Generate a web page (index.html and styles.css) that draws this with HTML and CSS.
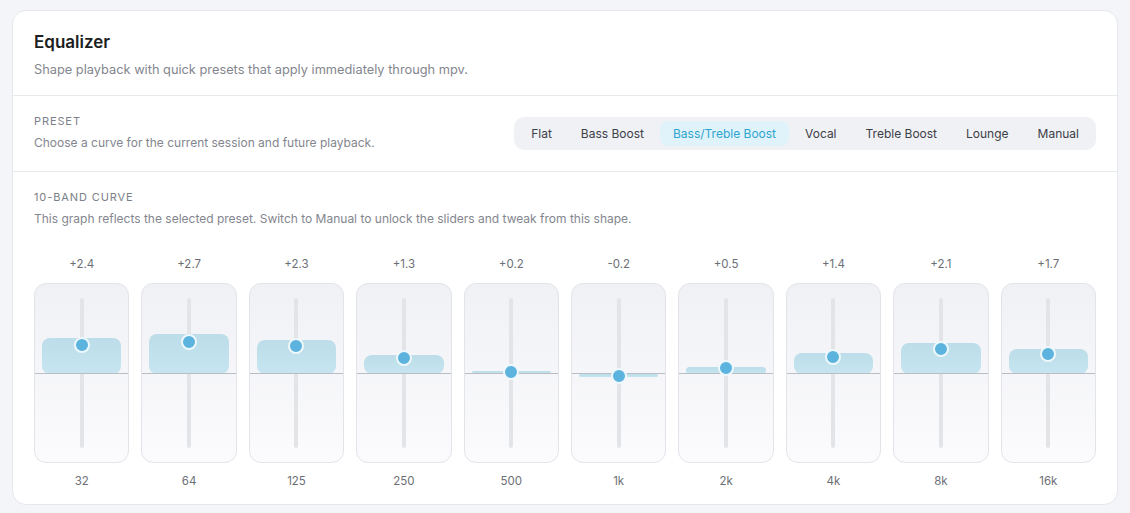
FILE: index.html
```html
<!DOCTYPE html>
<html lang="en">
<head>
    <meta charset="UTF-8">
    <meta name="viewport" content="width=device-width, initial-scale=1.0">
    <title>Equalizer</title>
    <link rel="stylesheet" href="styles.css">
</head>
<body>

<div class="panel">
    <div class="panel-head">
        <h2>Equalizer</h2>
        <p>Shape playback with quick presets that apply immediately through mpv.</p>
    </div>

    <div class="preset-row">
        <div>
            <div class="label">Preset</div>
            <p class="desc">Choose a curve for the current session and future playback.</p>
        </div>
        <div class="segmented">
            <button>Flat</button>
            <button>Bass Boost</button>
            <button class="active">Bass/Treble Boost</button>
            <button>Vocal</button>
            <button>Treble Boost</button>
            <button>Lounge</button>
            <button>Manual</button>
        </div>
    </div>

    <div class="curve">
        <div class="label">10-Band Curve</div>
        <p class="desc">This graph reflects the selected preset. Switch to Manual to unlock the sliders and tweak from this shape.</p>

        <div class="bands">
            <div class="band">
                <span class="val">+2.4</span>
                <div class="slider"><i class="track"></i><i class="bar" style="top:54px;height:36px"></i><i class="zero"></i><i class="thumb" style="top:53.2px"></i></div>
                <span class="freq">32</span>
            </div>
            <div class="band">
                <span class="val">+2.7</span>
                <div class="slider"><i class="track"></i><i class="bar" style="top:49.5px;height:40.5px"></i><i class="zero"></i><i class="thumb" style="top:49.6px"></i></div>
                <span class="freq">64</span>
            </div>
            <div class="band">
                <span class="val">+2.3</span>
                <div class="slider"><i class="track"></i><i class="bar" style="top:55.5px;height:34.5px"></i><i class="zero"></i><i class="thumb" style="top:54.4px"></i></div>
                <span class="freq">125</span>
            </div>
            <div class="band">
                <span class="val">+1.3</span>
                <div class="slider"><i class="track"></i><i class="bar" style="top:70.5px;height:19.5px"></i><i class="zero"></i><i class="thumb" style="top:66.4px"></i></div>
                <span class="freq">250</span>
            </div>
            <div class="band">
                <span class="val">+0.2</span>
                <div class="slider"><i class="track"></i><i class="bar" style="top:87px;height:3px"></i><i class="zero"></i><i class="thumb" style="top:79.6px"></i></div>
                <span class="freq">500</span>
            </div>
            <div class="band">
                <span class="val">-0.2</span>
                <div class="slider"><i class="track"></i><i class="bar" style="top:90px;height:3px"></i><i class="zero"></i><i class="thumb" style="top:84.4px"></i></div>
                <span class="freq">1k</span>
            </div>
            <div class="band">
                <span class="val">+0.5</span>
                <div class="slider"><i class="track"></i><i class="bar" style="top:82.5px;height:7.5px"></i><i class="zero"></i><i class="thumb" style="top:76px"></i></div>
                <span class="freq">2k</span>
            </div>
            <div class="band">
                <span class="val">+1.4</span>
                <div class="slider"><i class="track"></i><i class="bar" style="top:69px;height:21px"></i><i class="zero"></i><i class="thumb" style="top:65.2px"></i></div>
                <span class="freq">4k</span>
            </div>
            <div class="band">
                <span class="val">+2.1</span>
                <div class="slider"><i class="track"></i><i class="bar" style="top:58.5px;height:31.5px"></i><i class="zero"></i><i class="thumb" style="top:56.8px"></i></div>
                <span class="freq">8k</span>
            </div>
            <div class="band">
                <span class="val">+1.7</span>
                <div class="slider"><i class="track"></i><i class="bar" style="top:64.5px;height:25.5px"></i><i class="zero"></i><i class="thumb" style="top:61.6px"></i></div>
                <span class="freq">16k</span>
            </div>
        </div>
    </div>
</div>

</body>
</html>
```

FILE: styles.css
```css
body {
    margin: 0;
    padding: 10px 12px;
    background: #f4f5f8;
    font-family: Inter, "Noto Sans", sans-serif;
    color: #1c1d21;
}
.panel {
    background: #fff;
    border: 1px solid #e6e8ec;
    border-radius: 14px;
}
.panel-head {
    padding: 20px 21px 16px;
    border-bottom: 1px solid #e9eaee;
}
.panel-head h2 {
    margin: 0;
    font-size: 17px;
    line-height: 22px;
    font-weight: 600;
}
.panel-head p {
    margin: 8px 0 0;
    font-size: 12.8px;
    line-height: 18px;
    color: #83868e;
}
.label {
    font-size: 11px;
    line-height: 14px;
    letter-spacing: 0.9px;
    text-transform: uppercase;
    color: #7c7f87;
}
.desc {
    margin: 6px 0 0;
    font-size: 12px;
    line-height: 18px;
    color: #83868e;
}
.preset-row {
    display: flex;
    align-items: center;
    justify-content: space-between;
    padding: 18px 21px 19px;
    border-bottom: 1px solid #e9eaee;
}
.segmented {
    display: flex;
    gap: 3px;
    padding: 4px;
    background: #eff1f5;
    border-radius: 10px;
}
.segmented button {
    border: none;
    background: none;
    font-family: inherit;
    font-size: 12px;
    line-height: 25px;
    padding: 0 13px;
    border-radius: 8px;
    color: #3d4047;
    cursor: pointer;
}
.segmented button.active {
    background: #e0f2fa;
    color: #2ea5cf;
}
.curve {
    padding: 18px 21px 15px;
}
.bands {
    display: grid;
    grid-template-columns: repeat(10, 1fr);
    gap: 12px;
    margin-top: 28px;
}
.band {
    display: flex;
    flex-direction: column;
    align-items: center;
}
.val, .freq {
    font-size: 11.5px;
    line-height: 16px;
    color: #6c6f76;
}
.slider {
    position: relative;
    width: 100%;
    height: 180px;
    margin: 11px 0 10px;
    box-sizing: border-box;
    border: 1px solid #e2e4e9;
    border-radius: 12px;
    background: linear-gradient(#f0f1f5, #fbfbfd);
}
.slider i {
    position: absolute;
    display: block;
}
.track {
    left: 50%;
    top: 14px;
    bottom: 14px;
    width: 4px;
    margin-left: -2px;
    background: #e3e4e8;
    border-radius: 2px;
}
.bar {
    left: 7px;
    right: 7px;
    border-radius: 8px;
    background: linear-gradient(#bcdde9, #c6e5f0);
}
.zero {
    left: 0;
    right: 0;
    top: 89px;
    height: 1px;
    background: #b9bdc5;
}
.thumb {
    left: 50%;
    width: 12px;
    height: 12px;
    margin-left: -8px;
    border: 2px solid #eef8fc;
    border-radius: 50%;
    background: #5bb3de;
}
```
